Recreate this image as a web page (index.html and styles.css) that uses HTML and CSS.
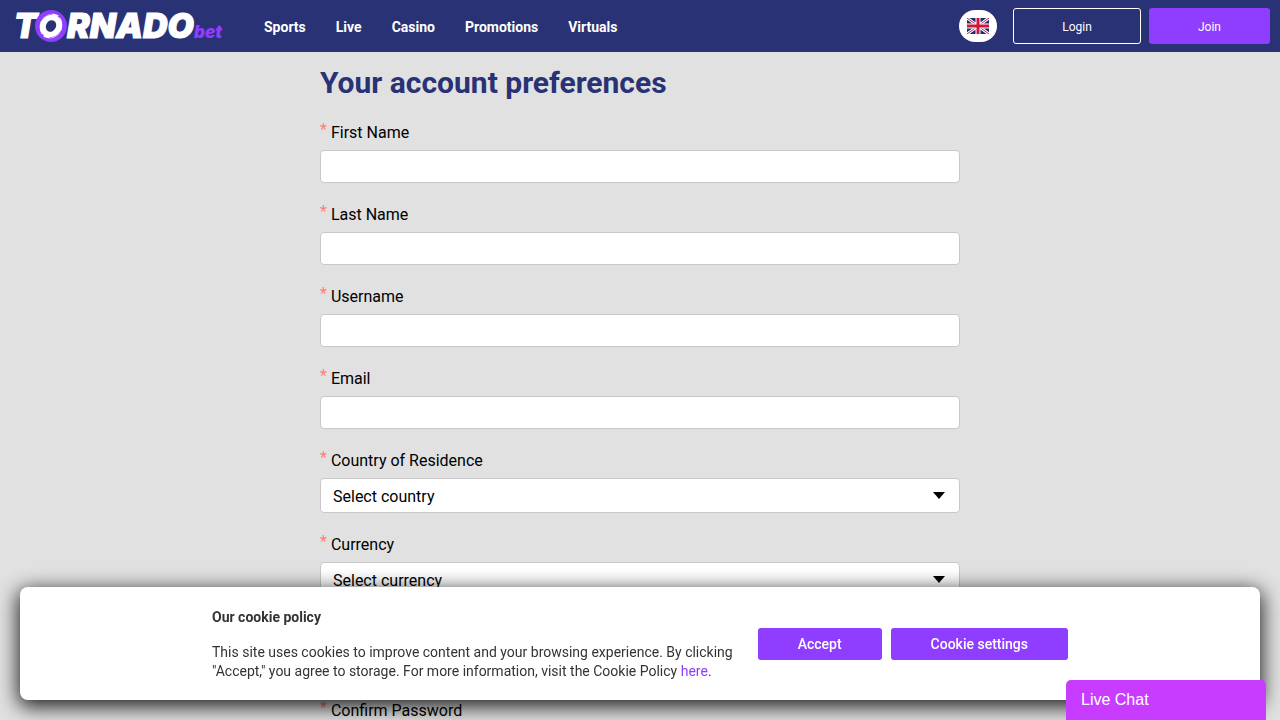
FILE: index.html
```
<!DOCTYPE html>
<html lang="en">
<head>
    <meta charset="UTF-8">
    <meta name="viewport" content="width=device-width, initial-scale=1.0">
    <title>Tornadobet - Your account preferences</title>
    <link rel="stylesheet" href="styles.css">
</head>
<body>
    <header class="header">
        <a class="logo" href="#" aria-label="Tornadobet">
            <svg width="212" height="36" viewBox="0 0 212 36">
                <text class="logo-main" x="0" y="30">T</text>
                <text class="logo-main" x="53" y="30">RNADO</text>
                <text class="logo-bet" x="180" y="30">bet</text>
                <circle cx="37" cy="18" r="16" fill="#8f3dff"/>
                <g transform="rotate(28 37 18)">
                    <ellipse cx="37" cy="18" rx="10" ry="12" fill="#fff"/>
                    <path d="M39 5c-9 0-14 7-13 15 1 5 4 8 7 10-3-4-4-8-3-12z" fill="#fff"/>
                    <path d="M35 31c9 0 14-7 13-15-1-5-4-8-7-10 3 4 4 8 3 12z" fill="#fff"/>
                    <path d="M33 7c-4 2-7 6-7 11M41 29c4-2 7-6 7-11" fill="none" stroke="#8f3dff" stroke-width=".6"/>
                    <ellipse cx="37" cy="18" rx="5" ry="6" fill="#283275"/>
                </g>
            </svg>
        </a>
        <nav class="nav">
            <a href="#">Sports</a>
            <a href="#">Live</a>
            <a href="#">Casino</a>
            <a href="#">Promotions</a>
            <a href="#">Virtuals</a>
        </nav>
        <div class="actions">
            <button class="language" type="button" aria-label="Language: English">
                <svg width="22" height="16" viewBox="0 0 22 16">
                    <rect width="22" height="16" fill="#1b2f73"/>
                    <path d="M0 0l22 16M22 0L0 16" stroke="#fff" stroke-width="3"/>
                    <path d="M0 0l22 16M22 0L0 16" stroke="#d0173a" stroke-width="1"/>
                    <path d="M11 0v16M0 8h22" stroke="#fff" stroke-width="5"/>
                    <path d="M11 0v16M0 8h22" stroke="#d0173a" stroke-width="3"/>
                </svg>
            </button>
            <button class="login" type="button">Login</button>
            <button class="join" type="button">Join</button>
        </div>
    </header>

    <main class="content">
        <h1>Your account preferences</h1>
        <form>
            <div class="field">
                <label for="first-name"><span class="required">*</span>First Name</label>
                <input type="text" id="first-name">
            </div>
            <div class="field">
                <label for="last-name"><span class="required">*</span>Last Name</label>
                <input type="text" id="last-name">
            </div>
            <div class="field">
                <label for="username"><span class="required">*</span>Username</label>
                <input type="text" id="username">
            </div>
            <div class="field">
                <label for="email"><span class="required">*</span>Email</label>
                <input type="email" id="email">
            </div>
            <div class="field">
                <label for="country"><span class="required">*</span>Country of Residence</label>
                <div class="select">
                    <select id="country">
                        <option>Select country</option>
                    </select>
                </div>
            </div>
            <div class="field">
                <label for="currency"><span class="required">*</span>Currency</label>
                <div class="select">
                    <select id="currency">
                        <option>Select currency</option>
                    </select>
                </div>
            </div>
            <div class="field">
                <label for="password"><span class="required">*</span>Password</label>
                <input type="password" id="password">
            </div>
            <div class="field">
                <label for="confirm"><span class="required">*</span>Confirm Password</label>
                <input type="password" id="confirm">
            </div>
        </form>
    </main>

    <section class="cookies">
        <div class="cookies-inner">
            <div class="cookies-text">
                <h2>Our cookie policy</h2>
                <p>This site uses cookies to improve content and your browsing experience. By clicking "Accept," you agree to storage. For more information, visit the Cookie Policy <a href="#">here</a>.</p>
            </div>
            <div class="cookies-buttons">
                <button type="button">Accept</button>
                <button type="button">Cookie settings</button>
            </div>
        </div>
    </section>

    <button class="chat" type="button">Live Chat</button>
</body>
</html>
```
FILE: styles.css
```
* {
    box-sizing: border-box;
}
html {
    scrollbar-width: none;
}
body {
    margin: 0;
    background: #e1e1e1;
    color: #000;
    font-family: Roboto, sans-serif;
    font-size: 16px;
}
button {
    font-family: inherit;
    border: none;
    cursor: pointer;
}

/* header */
.header {
    position: sticky;
    top: 0;
    z-index: 1;
    display: flex;
    align-items: center;
    height: 52px;
    padding: 0 10px 0 14px;
    background: #283275;
}
.logo {
    display: flex;
}
.logo svg {
    overflow: visible;
}
.logo-main {
    font-family: Inter, sans-serif;
    font-size: 34px;
    font-weight: 900;
    font-style: italic;
    fill: #fff;
    stroke: #fff;
    stroke-width: 1px;
}
.logo-bet {
    font-family: Inter, sans-serif;
    font-size: 17px;
    font-weight: 900;
    font-style: italic;
    fill: #8f3dff;
}
.nav {
    display: flex;
    gap: 30px;
    margin-left: 38px;
    padding-top: 2px;
}
.nav a {
    color: #fff;
    font-size: 14px;
    font-weight: 700;
    text-decoration: none;
}
.actions {
    display: flex;
    align-items: center;
    gap: 8px;
    margin-left: auto;
}
.language {
    display: flex;
    align-items: center;
    justify-content: center;
    width: 38px;
    height: 32px;
    margin-right: 8px;
    padding: 0;
    border-radius: 16px;
    background: #fff;
}
.login,
.join {
    height: 36px;
    padding-top: 2px;
    border-radius: 3px;
    color: #fff;
    font-size: 12px;
}
.login {
    width: 128px;
    border: 1px solid #fff;
    background: transparent;
}
.join {
    width: 121px;
    background: #8f3dff;
}

/* form */
.content {
    max-width: 640px;
    margin: 0 auto;
    padding: 12px 0 120px;
}
h1 {
    margin: 0 0 19px;
    color: #283275;
    font-size: 30px;
    font-weight: 700;
    line-height: 38px;
}
.field {
    margin-bottom: 20px;
}
.field label {
    display: flex;
    gap: 4px;
    margin-bottom: 6px;
    line-height: 23px;
}
.required {
    color: #ff8078;
    line-height: 17px;
}
.field input,
.field select {
    display: block;
    width: 100%;
    height: 33px;
    padding: 0 12px;
    border: 1px solid #c8c8c8;
    border-radius: 4px;
    background: #fff;
    color: #000;
    font-family: inherit;
    font-size: 16px;
}
.field select {
    height: 35px;
    padding-top: 2px;
    appearance: none;
}
.select {
    position: relative;
}
.select::after {
    content: "";
    position: absolute;
    top: 14px;
    right: 15px;
    border: 6px solid transparent;
    border-top: 7px solid #000;
    border-bottom: 0;
    pointer-events: none;
}

/* cookie bar */
.cookies {
    position: fixed;
    left: 20px;
    right: 20px;
    bottom: 20px;
    z-index: 2;
    padding: 19px 20px;
    border-radius: 8px;
    background: #fff;
    color: #333;
    font-size: 14px;
    line-height: 19px;
    box-shadow: 0 5px 20px 2px rgba(0, 0, 0, 0.85);
}
.cookies-inner {
    display: flex;
    align-items: center;
    gap: 16px;
    max-width: 856px;
    margin: 0 auto;
}
.cookies-text {
    flex: 1;
    padding-top: 2px;
}
.cookies h2 {
    margin: 0 0 16px;
    font-size: 14px;
    font-weight: 700;
    line-height: 19px;
}
.cookies p {
    margin: 0;
}
.cookies a {
    color: #8f3dff;
    text-decoration: none;
}
.cookies-buttons {
    display: flex;
    gap: 9px;
}
.cookies-buttons button {
    height: 32px;
    padding: 0 40px;
    border-radius: 3px;
    background: #8f3dff;
    color: #fff;
    font-size: 14px;
    font-weight: 500;
}

/* chat */
.chat {
    position: fixed;
    right: 14px;
    bottom: 0;
    z-index: 3;
    width: 200px;
    height: 40px;
    padding: 0 15px;
    border-radius: 5px 5px 0 0;
    background: #c83cff;
    color: #fff;
    font-family: "Liberation Sans", sans-serif;
    font-size: 16px;
    text-align: left;
}
```
